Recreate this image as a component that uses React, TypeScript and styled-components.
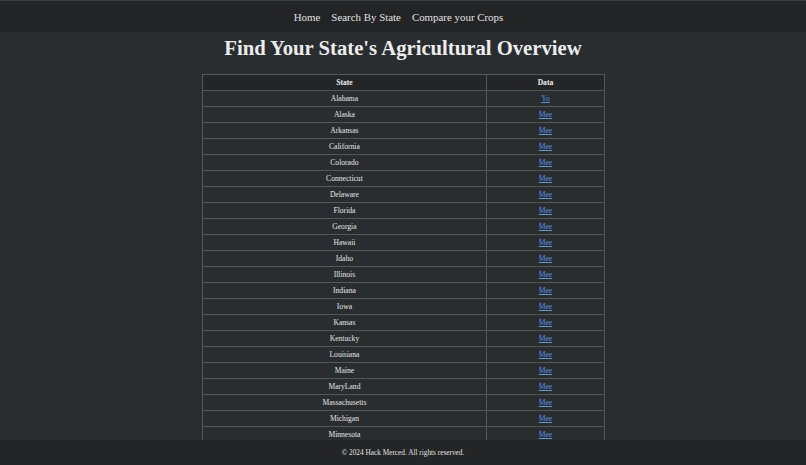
import React from 'react';
import styled, { createGlobalStyle } from 'styled-components';

const GlobalStyle = createGlobalStyle`
  body {
    margin: 0;
    background: #2a2d30;
    color: #e4e4e4;
    font-family: 'Liberation Serif', 'Times New Roman', serif;
  }
`;

const StyledNav = styled.nav`
  display: flex;
  justify-content: center;
  align-items: center;
  gap: 11px;
  height: 31px;
  padding-right: 9px;
  border-top: 1px solid #3a3c3f;
  background: #222426;
`;

const StyledNavLink = styled.a`
  color: #e2e2e2;
  font-size: 10.9px;
  text-decoration: none;
`;

const StyledTitle = styled.h1`
  margin: 4px 0 14px;
  font-size: 20.7px;
  line-height: 24px;
  text-align: center;
  color: #ececec;
`;

const StyledTable = styled.table`
  width: 403px;
  margin: 0 auto 40px;
  border-collapse: collapse;
  font-size: 7.6px;
`;

const StyledHead = styled.th<{ $width: number }>`
  width: ${({ $width }) => $width}px;
  height: 15px;
  padding: 0;
  border: 1px solid #545658;
  background: #232527;
  font-weight: bold;
  color: #eeeeee;
`;

const StyledCell = styled.td`
  height: 15px;
  padding: 0;
  border: 1px solid #545658;
  text-align: center;
  color: #e6e6e6;
`;

const StyledLink = styled.a`
  color: #5b95e0;
  text-decoration: underline;
`;

const StyledFooter = styled.footer`
  position: fixed;
  left: 0;
  right: 0;
  bottom: 0;
  display: flex;
  justify-content: center;
  align-items: center;
  height: 25px;
  background: #232527;
  font-size: 7.3px;
  color: #e2e2e2;
`;

const states = [
  'Alabama', 'Alaska', 'Arkansas', 'California', 'Colorado', 'Connecticut',
  'Delaware', 'Florida', 'Georgia', 'Hawaii', 'Idaho', 'Illinois', 'Indiana',
  'Iowa', 'Kansas', 'Kentucky', 'Louisiana', 'Maine', 'MaryLand',
  'Massachusetts', 'Michigan', 'Minnesota', 'Mississippi', 'Missouri',
  'Montana', 'Nebraska', 'Nevada', 'New Hampshire', 'New Jersey',
];

const App = () => {
  return (
    <>
      <GlobalStyle />
      <StyledNav>
        <StyledNavLink href='#'>Home</StyledNavLink>
        <StyledNavLink href='#'>Search By State</StyledNavLink>
        <StyledNavLink href='#'>Compare your Crops</StyledNavLink>
      </StyledNav>
      <StyledTitle>Find Your State's Agricultural Overview</StyledTitle>
      <StyledTable>
        <thead>
          <tr>
            <StyledHead $width={286}>State</StyledHead>
            <StyledHead $width={117}>Data</StyledHead>
          </tr>
        </thead>
        <tbody>
          {states.map((state, i) => (
            <tr key={state}>
              <StyledCell>{state}</StyledCell>
              <StyledCell>
                <StyledLink href='#'>{i === 0 ? 'Yo' : 'Mee'}</StyledLink>
              </StyledCell>
            </tr>
          ))}
        </tbody>
      </StyledTable>
      <StyledFooter>© 2024 Hack Merced. All rights reserved.</StyledFooter>
    </>
  );
};

export default App;
